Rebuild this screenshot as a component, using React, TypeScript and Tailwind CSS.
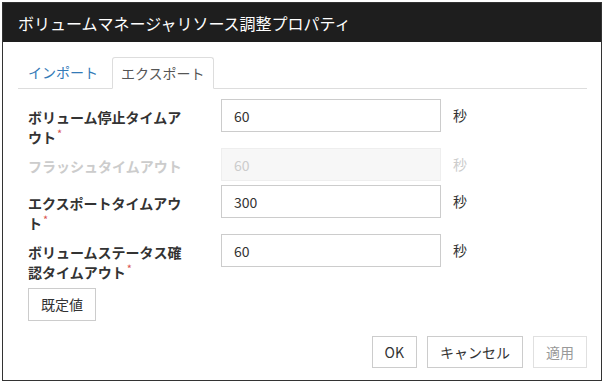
import React from 'react';

const font = { fontFamily: '"Noto Sans CJK JP", "Noto Sans", sans-serif' };

type Row = { label: string; value: string; disabled?: boolean; required?: boolean };

const rows: Row[] = [
  { label: 'ボリューム停止タイムアウト', value: '60', required: true },
  { label: 'フラッシュタイムアウト', value: '60', disabled: true },
  { label: 'エクスポートタイムアウト', value: '300', required: true },
  { label: 'ボリュームステータス確認タイムアウト', value: '60', required: true },
];

function FieldRow({ row }: { row: Row }) {
  return (
    <div className="flex items-start min-h-[36px] mb-[1px]">
      {/* label */}
      <div
        className={`w-[160px] mr-[33px] pt-[8px] text-[14px] leading-[20px] font-bold ${
          row.disabled ? 'text-[#cccccc]' : 'text-[#333333]'
        }`}
      >
        {row.label}
        {row.required && (
          <span className="relative -top-[5px] ml-[1px] text-[#d9534f] text-[11px] leading-none font-normal">*</span>
        )}
      </div>
      <input
        readOnly
        disabled={row.disabled}
        value={row.value}
        className={`w-[220px] h-[33px] px-[12px] text-[14px] outline-none border ${
          row.disabled
            ? 'bg-[#f7f7f7] border-[#eeeeee] text-[#cccccc]'
            : 'bg-white border-[#cccccc] text-[#333333]'
        }`}
        style={font}
      />
      <span
        className={`ml-[12px] pt-[6px] text-[14px] leading-[20px] ${
          row.disabled ? 'text-[#cccccc]' : 'text-[#333333]'
        }`}
      >
        秒
      </span>
    </div>
  );
}

export default function App() {
  return (
    <div className="w-[604px] h-[384px] bg-white pt-[2px] pl-[2px]" style={font}>
      <div className="w-[600px] h-[379px] border border-[#333333] flex flex-col bg-white">
        {/* Header */}
        <div className="h-[39px] bg-[#1e1e1e] flex items-center pl-[15px] shrink-0">
          <span className="text-white text-[16px]">ボリュームマネージャリソース調整プロパティ</span>
        </div>

        <div className="flex-1 flex flex-col pl-[15px] pr-[14px]">
          {/* Tabs */}
          <div className="mt-[15px] flex items-end border-b border-[#dddddd] h-[32px]">
            <div className="px-[10px] h-[31px] flex items-center text-[14px] text-[#337ab7]">インポート</div>
            <div className="ml-[4px] px-[8px] h-[32px] -mb-px flex items-center text-[14px] text-[#555555] bg-white border border-[#dddddd] border-b-white rounded-t-[3px]">
              エクスポート
            </div>
          </div>

          {/* Fields */}
          <div className="pl-[10px] pt-[10px]">
            {rows.map((r) => (
              <FieldRow key={r.label} row={r} />
            ))}
            <button className="mt-[5px] h-[33px] px-[12px] border border-[#cccccc] bg-white text-[14px] text-[#333333]">
              既定値
            </button>
          </div>

          {/* Footer */}
          <div className="mt-auto mb-[12px] flex justify-end gap-[10px]">
            <button className="h-[32px] px-[12px] border border-[#cccccc] bg-white text-[14px] text-[#333333]">OK</button>
            <button className="h-[32px] px-[12px] border border-[#cccccc] bg-white text-[14px] text-[#333333]">
              キャンセル
            </button>
            <button className="h-[32px] px-[12px] border border-[#e0e0e0] bg-white text-[14px] text-[#999999]">適用</button>
          </div>
        </div>
      </div>
    </div>
  );
}
